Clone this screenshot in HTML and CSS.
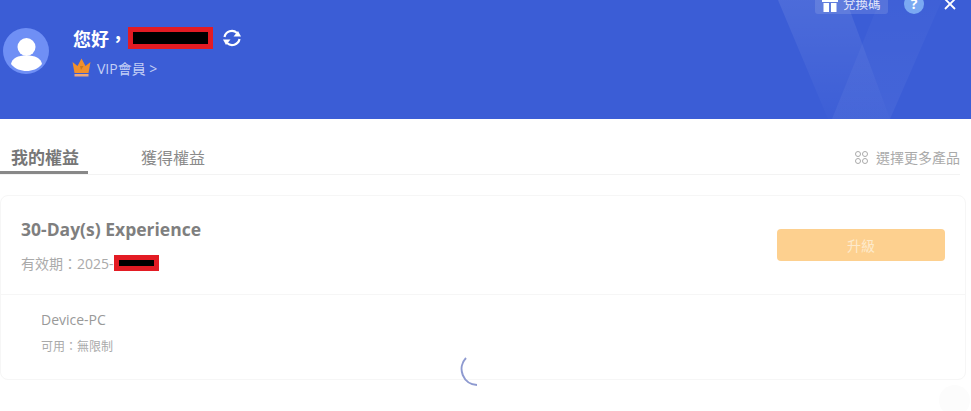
FILE: index.html
```html
<!DOCTYPE html>
<html lang="zh-Hant">
<head>
    <meta charset="UTF-8">
    <meta name="viewport" content="width=device-width, initial-scale=1.0">
    <title>會員中心</title>
    <link rel="stylesheet" href="styles.css">
</head>
<body>
    <header class="top-header">
        <svg class="header-deco" width="971" height="119" viewBox="0 0 971 119">
            <defs>
                <linearGradient id="decoFade" x1="0" y1="0" x2="0" y2="1">
                    <stop offset="0" stop-color="#fff" stop-opacity="0.09"/>
                    <stop offset="1" stop-color="#fff" stop-opacity="0.01"/>
                </linearGradient>
                <linearGradient id="decoFadeUp" x1="0" y1="1" x2="0" y2="0">
                    <stop offset="0" stop-color="#fff" stop-opacity="0.05"/>
                    <stop offset="1" stop-color="#fff" stop-opacity="0.02"/>
                </linearGradient>
            </defs>
            <polygon points="778,0 846,0 890,119 828,119" fill="url(#decoFade)"/>
            <polygon points="880,0 942,0 890,119 832,119" fill="url(#decoFadeUp)"/>
        </svg>

        <div class="avatar">
            <svg width="46" height="46" viewBox="0 0 46 46">
                <circle cx="23" cy="23" r="23" fill="#6f8ff5"/>
                <circle cx="23.5" cy="19" r="9" fill="#fff"/>
                <path d="M8 36 C9 30 15 27.5 23.5 27.5 C32 27.5 38 30 39 36 C35 41 29 43 23.5 43 C18 43 12 41 8 36 Z" fill="#fff"/>
            </svg>
        </div>

        <div class="user-info">
            <div class="greeting">
                <span class="greeting-text">您好，</span>
                <span class="redact redact-name"></span>
                <svg class="refresh-icon" width="20" height="20" viewBox="0 0 20 20" fill="none" stroke="#fff" stroke-width="2.2">
                    <path d="M2.5 9 A7.5 7.5 0 0 1 15 5"/>
                    <path d="M17.5 11 A7.5 7.5 0 0 1 5 15"/>
                    <polygon points="19,8.5 11.5,8.5 16,3" fill="#fff" stroke="none"/>
                    <polygon points="1,11.5 8.5,11.5 4,17" fill="#fff" stroke="none"/>
                </svg>
            </div>
            <div class="vip-row">
                <svg width="19" height="20" viewBox="0 0 19 20">
                    <path d="M0.5 4 L5.5 8 L9.5 0.5 L13.5 8 L18.5 4 L16.5 15 L2.5 15 Z" fill="#f2902c"/>
                    <rect x="2.5" y="16" width="14" height="2.5" fill="#eda77a"/>
                    <path d="M8 8 L11.5 8 L9 12" fill="#c9791b"/>
                </svg>
                <span>VIP會員 &gt;</span>
            </div>
        </div>

        <div class="header-tools">
            <div class="redeem-btn">
                <svg width="16" height="19" viewBox="0 0 16 19">
                    <rect x="0" y="3" width="16" height="5" fill="#fff"/>
                    <rect x="1.5" y="9" width="5.5" height="9" fill="#fff"/>
                    <rect x="9" y="9" width="5.5" height="9" fill="#fff"/>
                </svg>
                <span>兌換碼</span>
            </div>
            <div class="help-btn">?</div>
            <svg class="close-icon" width="12" height="12" viewBox="0 0 12 12" stroke="#fff" stroke-width="1.8">
                <path d="M1 1 L11 11 M11 1 L1 11"/>
            </svg>
        </div>
    </header>

    <main class="content">
        <nav class="tabs">
            <div class="tab tab-active">我的權益</div>
            <div class="tab">獲得權益</div>
            <div class="more-link">
                <svg width="13" height="13" viewBox="0 0 13 13" fill="none" stroke="#aaa" stroke-width="1">
                    <circle cx="3" cy="3" r="2.5"/>
                    <circle cx="10" cy="3" r="2.5"/>
                    <circle cx="3" cy="10" r="2.5"/>
                    <circle cx="10" cy="10" r="2.5"/>
                </svg>
                <span>選擇更多產品</span>
            </div>
        </nav>

        <section class="plan-card">
            <div class="plan-head">
                <div>
                    <h2 class="plan-title">30-Day(s) Experience</h2>
                    <div class="plan-date">
                        <span>有效期：2025-</span><span class="redact redact-date"></span>
                    </div>
                </div>
                <button class="upgrade-btn">升級</button>
            </div>
            <div class="plan-body">
                <div class="device-name">Device-PC</div>
                <div class="device-limit">可用：無限制</div>
            </div>
        </section>
    </main>

    <svg class="spinner" width="30" height="32" viewBox="0 0 30 32" fill="none" stroke="#8e9ad0" stroke-width="2">
        <path d="M6 3 A16 16 0 0 0 17 30"/>
    </svg>
    <div class="ghost-dot"></div>
</body>
</html>
```

FILE: styles.css
```css
* {
    margin: 0;
    padding: 0;
    box-sizing: border-box;
}

body {
    width: 971px;
    height: 411px;
    overflow: hidden;
    position: relative;
    background: #fff;
    font-family: "Open Sans", "Noto Sans CJK TC", sans-serif;
}

.top-header {
    position: relative;
    height: 119px;
    background: #3b5dd6;
    display: flex;
    padding: 28px 0 0 3px;
    overflow: hidden;
}

.header-deco {
    position: absolute;
    left: 0;
    top: 0;
}

.avatar {
    width: 46px;
    height: 46px;
    margin-right: 24px;
    position: relative;
}

.user-info {
    position: relative;
    display: flex;
    flex-direction: column;
    gap: 9px;
}

.greeting {
    display: flex;
    align-items: center;
    height: 22px;
    margin-top: -1px;
    color: #fff;
}

.greeting-text {
    width: 55px;
    font-size: 18px;
    font-weight: 700;
    white-space: nowrap;
}

.redact {
    display: block;
    background: #000;
    border-style: solid;
    border-color: #e31b23;
}

.redact-name {
    width: 85px;
    height: 22px;
    border-width: 5px;
}

.refresh-icon {
    margin-left: 9px;
}

.vip-row {
    display: flex;
    align-items: center;
    gap: 6px;
    height: 20px;
    margin-left: -1px;
    color: #c3cff5;
    font-size: 14px;
}

.header-tools {
    position: absolute;
    top: -8px;
    left: 815px;
    display: flex;
    align-items: center;
}

.redeem-btn {
    width: 73px;
    height: 21px;
    display: flex;
    align-items: center;
    gap: 5px;
    padding-left: 7px;
    background: rgba(255, 255, 255, 0.12);
    border-radius: 3px;
    color: #e4e9fb;
    font-size: 12.5px;
    white-space: nowrap;
}

.help-btn {
    width: 20px;
    height: 20px;
    margin: 2px 0 0 16px;
    background: #7ba9f2;
    border-radius: 50%;
    color: #fff;
    font-size: 14px;
    font-weight: 700;
    line-height: 20px;
    text-align: center;
}

.close-icon {
    margin: 2px 0 0 20px;
}

.content {
    padding-top: 27px;
}

.tabs {
    display: flex;
    align-items: flex-start;
    width: 960px;
    height: 29px;
    border-bottom: 1px solid #f3f3f3;
    position: relative;
}

.tab {
    width: 63px;
    font-size: 16px;
    line-height: 24px;
    color: #8a8a8a;
    white-space: nowrap;
}

.tab-active {
    width: 88px;
    height: 28px;
    margin-right: 53px;
    padding-left: 11px;
    border-bottom: 3px solid #888;
    color: #777;
    font-size: 17px;
    font-weight: 700;
}

.more-link {
    margin-left: auto;
    display: flex;
    align-items: center;
    gap: 8px;
    height: 22px;
    color: #aaa;
    font-size: 14px;
}

.plan-card {
    width: 966px;
    height: 185px;
    margin-top: 20px;
    border: 1px solid #f6f6f6;
    border-radius: 8px;
}

.plan-head {
    height: 99px;
    display: flex;
    justify-content: space-between;
    padding: 20px 20px 0 20px;
    border-bottom: 1px solid #f6f6f6;
}

.plan-title {
    font-size: 17.5px;
    font-weight: 700;
    line-height: 26px;
    color: #7f7f7f;
}

.plan-date {
    display: flex;
    align-items: center;
    margin-top: 11px;
    font-size: 14px;
    color: #aaa;
}

.redact-date {
    width: 45px;
    height: 16px;
    border-width: 5px;
}

.upgrade-btn {
    width: 168px;
    height: 32px;
    margin-top: 13px;
    border: none;
    border-radius: 4px;
    background: #fdd08f;
    color: #fdeacb;
    font-family: inherit;
    font-size: 14px;
}

.plan-body {
    padding: 15px 0 0 40px;
}

.device-name {
    font-size: 14px;
    line-height: 20px;
    color: #999;
}

.device-limit {
    margin-top: 8px;
    font-size: 12px;
    line-height: 18px;
    color: #aaa;
}

.spinner {
    position: absolute;
    left: 460px;
    top: 355px;
}

.ghost-dot {
    position: absolute;
    left: 939px;
    top: 385px;
    width: 31px;
    height: 31px;
    border-radius: 50%;
    background: #fcfcfc;
}
```
